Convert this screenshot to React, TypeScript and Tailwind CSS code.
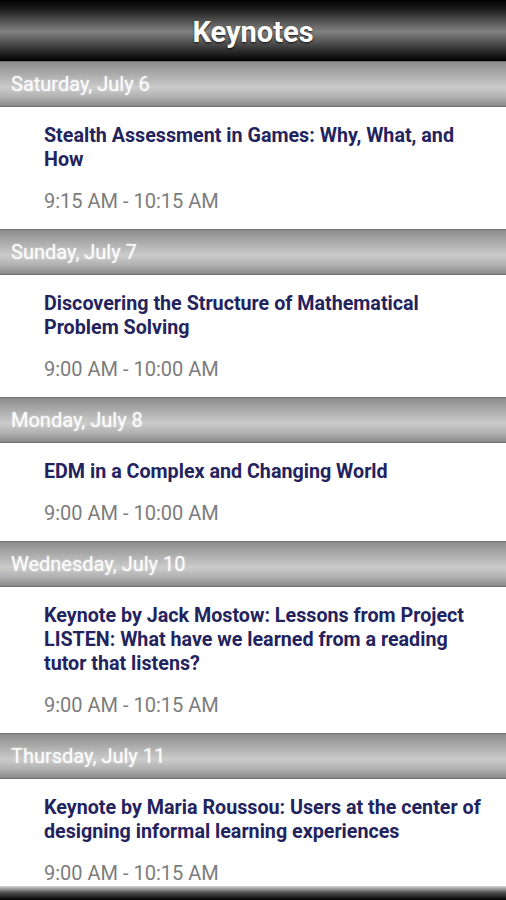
const keynotes = [
  {
    day: "Saturday, July 6",
    title: "Stealth Assessment in Games: Why, What, and How",
    time: "9:15 AM - 10:15 AM",
  },
  {
    day: "Sunday, July 7",
    title: "Discovering the Structure of Mathematical Problem Solving",
    time: "9:00 AM - 10:00 AM",
  },
  {
    day: "Monday, July 8",
    title: "EDM in a Complex and Changing World",
    time: "9:00 AM - 10:00 AM",
  },
  {
    day: "Wednesday, July 10",
    title:
      "Keynote by Jack Mostow: Lessons from Project LISTEN: What have we learned from a reading tutor that listens?",
    time: "9:00 AM - 10:15 AM",
  },
  {
    day: "Thursday, July 11",
    title: "Keynote by Maria Roussou: Users at the center of designing informal learning experiences",
    time: "9:00 AM - 10:15 AM",
  },
];

export default function App() {
  return (
    <div className="h-[900px] w-full flex flex-col overflow-hidden bg-white font-['Roboto',sans-serif]">
      {/* TOP BAR */}
      <div className="h-[61px] shrink-0 flex items-center justify-center bg-[linear-gradient(to_bottom,#000_0%,#1c1c1c_15%,#828282_52%,#2a2a2a_84%,#000_100%)]">
        <h1 className="text-[29px] leading-[34px] font-bold text-white pt-[3px] [text-shadow:0_1px_2px_rgba(0,0,0,0.8)]">
          Keynotes
        </h1>
      </div>

      {/* LIST */}
      <div className="flex-1 overflow-hidden">
        {keynotes.map((k) => (
          <div key={k.day}>
            <div className="h-[46px] flex items-center px-[11px] border-y border-[#6e6e6e] bg-[linear-gradient(to_bottom,#8c8c8c_0%,#a8a8a8_25%,#cbcbcb_58%,#b0b0b0_80%,#8a8a8a_100%)]">
              <span className="text-[20px] text-white/95 [text-shadow:0_0_2px_rgba(255,255,255,0.6)]">
                {k.day}
              </span>
            </div>
            <div className="pl-[44px] pr-4 pt-[17px] pb-4">
              <p className="text-[19.7px] leading-[24px] font-bold text-[#23235e]">{k.title}</p>
              <p className="mt-[17px] text-[20px] leading-[24px] text-[#7c7c7c]">{k.time}</p>
            </div>
          </div>
        ))}
      </div>

      {/* BOTTOM BAR */}
      <div className="h-[14px] shrink-0 bg-[linear-gradient(to_bottom,#d8d8d8_0%,#555_45%,#000_100%)]"></div>
    </div>
  );
}
